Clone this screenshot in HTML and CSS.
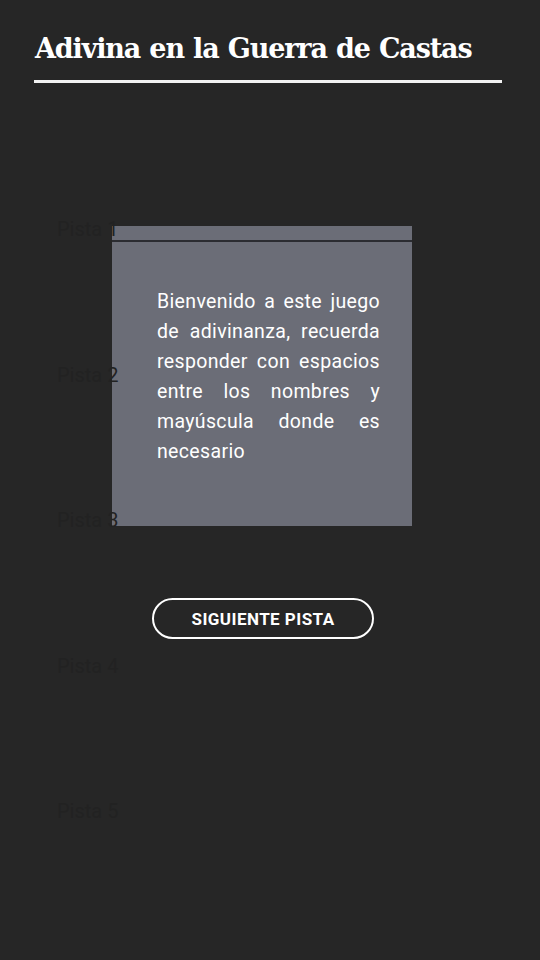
FILE: index.html
```html
<!DOCTYPE html>
<html lang="es">
<head>
<meta charset="utf-8">
<title>Adivina en la Guerra de Castas</title>
<link rel="stylesheet" href="styles.css">
</head>
<body>
<header class="header">
  <h1 class="title">Adivina en la Guerra de Castas</h1>
</header>
<main class="clues">
  <p class="clue">Pista 1</p>
  <p class="clue">Pista 2</p>
  <p class="clue">Pista 3</p>
  <p class="clue">Pista 4</p>
  <p class="clue">Pista 5</p>
</main>
<div class="overlay">
  <div class="dialog">
    <div class="dialog-head"></div>
    <div class="dialog-body">
      <p class="dialog-text">Bienvenido a este juego de adivinanza, recuerda responder con espacios entre los nombres y mayúscula donde es necesario</p>
    </div>
  </div>
  <button class="next-btn" type="button">SIGUIENTE PISTA</button>
</div>
</body>
</html>
```
FILE: styles.css
```css
html, body {
  margin: 0;
  padding: 0;
}
body {
  background: #262626;
  width: 540px;
  height: 960px;
  overflow: hidden;
  font-family: Roboto, "Liberation Sans", sans-serif;
  position: relative;
}
.header {
  padding: 30px 38px 0 34px;
}
.title {
  margin: 0;
  padding: 0 0 12px 1px;
  font-family: "DejaVu Serif", serif;
  font-weight: 700;
  font-size: 27px;
  letter-spacing: -1.15px;
  word-spacing: 1px;
  line-height: 38px;
  color: #ffffff;
  border-bottom: 3px solid #f2f2f2;
  white-space: nowrap;
}
.clues {
  display: flex;
  flex-direction: column;
  gap: 125.5px;
  padding: 136px 0 0 57px;
  position: relative;
  z-index: 2;
}
.clue {
  margin: 0;
  font-size: 20px;
  line-height: 20px;
  height: 20px;
  color: #222222;
}
.overlay {
  position: absolute;
  left: 112px;
  top: 226px;
  width: 300px;
  display: flex;
  flex-direction: column;
  z-index: 1;
}
.dialog {
  width: 300px;
  height: 300px;
  background: #6b6d77;
  display: flex;
  flex-direction: column;
}
.dialog-head {
  height: 14px;
  border-bottom: 2px solid #2b2c31;
}
.dialog-body {
  flex: 1;
  display: flex;
  align-items: center;
  padding: 0 32px 0 45px;
  margin-top: -14px;
}
.dialog-text {
  margin: 0;
  font-size: 19.5px;
  letter-spacing: 0.35px;
  line-height: 30px;
  color: #ffffff;
  text-align: justify;
}
.next-btn {
  margin: 72px 0 0 40px;
  width: 222px;
  height: 41px;
  border: 2px solid #ffffff;
  border-radius: 21px;
  background: transparent;
  color: #ffffff;
  font-family: Roboto, "Liberation Sans", sans-serif;
  font-weight: 700;
  font-size: 17px;
  letter-spacing: 0.45px;
  cursor: pointer;
}
```
